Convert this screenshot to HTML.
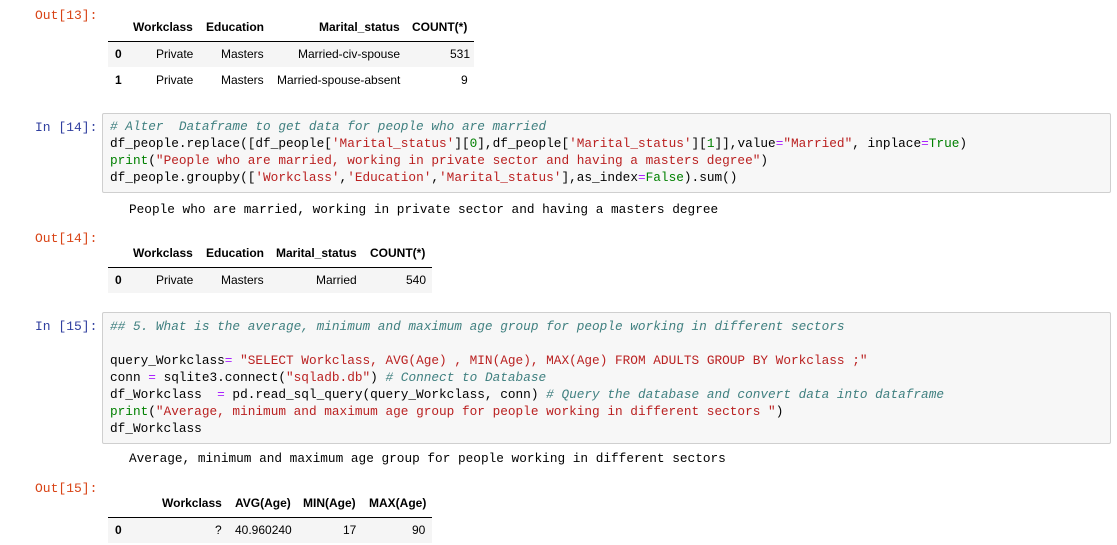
<!DOCTYPE html>
<html><head><meta charset="utf-8"><style>
body{margin:0;width:1117px;height:545px;background:#fff;position:relative;overflow:hidden;font-family:"Liberation Sans",Arial,sans-serif}
.p{position:absolute;font-family:"Liberation Mono",monospace;font-size:13px;line-height:17px;white-space:pre}
.out{color:#D84315}.in{color:#303F9F}
.box{position:absolute;left:102px;width:1007px;background:#f7f7f7;border:1px solid #cfcfcf;border-radius:2px}
.c{position:absolute;left:110px;font-family:"Liberation Mono",monospace;font-size:12.75px;line-height:17px;white-space:pre;color:#000}
.cm{color:#408080;font-style:italic}.s{color:#BA2121}.k{color:#008000}.o{color:#AA22FF}.n{color:#008000}
.t{position:absolute;font-size:12px;line-height:14px;white-space:pre;color:#000}
.b{font-weight:bold}
.r{text-align:right}
.hr{position:absolute;height:1px;background:#000}
.bg{position:absolute;background:#f5f5f5}
</style></head><body>
<div class="p out" style="left:35px;top:7px">Out[13]:</div>
<div class="t b" style="left:133px;top:20px">Workclass</div>
<div class="t b" style="left:206px;top:20px">Education</div>
<div class="t b" style="left:319px;top:20px">Marital_status</div>
<div class="t b" style="left:412px;top:20px">COUNT(*)</div>
<div class="hr" style="left:108px;top:41px;width:366px"></div>
<div class="bg" style="left:108px;top:42px;width:366px;height:25px"></div>
<div class="t b" style="left:115px;top:47px">0</div>
<div class="t" style="left:156px;top:47px">Private</div>
<div class="t" style="left:221px;top:47px">Masters</div>
<div class="t" style="left:298px;top:47px">Married-civ-spouse</div>
<div class="t" style="left:450px;top:47px">531</div>
<div class="t b" style="left:115px;top:73px">1</div>
<div class="t" style="left:156px;top:73px">Private</div>
<div class="t" style="left:221px;top:73px">Masters</div>
<div class="t" style="left:277px;top:73px">Married-spouse-absent</div>
<div class="t" style="left:461px;top:73px">9</div>

<div class="p in" style="left:35px;top:119px">In [14]:</div>
<div class="box" style="top:113px;height:78px"></div>
<div class="c" style="top:118px"><span class="cm"># Alter  Dataframe to get data for people who are married</span></div>
<div class="c" style="top:135px">df_people.replace([df_people[<span class="s">'Marital_status'</span>][<span class="n">0</span>],df_people[<span class="s">'Marital_status'</span>][<span class="n">1</span>]],value<span class="o">=</span><span class="s">"Married"</span>, inplace<span class="o">=</span><span class="k">True</span>)</div>
<div class="c" style="top:152px"><span class="k">print</span>(<span class="s">"People who are married, working in private sector and having a masters degree"</span>)</div>
<div class="c" style="top:169px">df_people.groupby([<span class="s">'Workclass'</span>,<span class="s">'Education'</span>,<span class="s">'Marital_status'</span>],as_index<span class="o">=</span><span class="k">False</span>).sum()</div>
<div class="c" style="left:129px;top:201px">People who are married, working in private sector and having a masters degree</div>

<div class="p out" style="left:35px;top:230px">Out[14]:</div>
<div class="t b" style="left:133px;top:246px">Workclass</div>
<div class="t b" style="left:206px;top:246px">Education</div>
<div class="t b" style="left:276px;top:246px">Marital_status</div>
<div class="t b" style="left:370px;top:246px">COUNT(*)</div>
<div class="hr" style="left:108px;top:267px;width:324px"></div>
<div class="bg" style="left:108px;top:268px;width:324px;height:25px"></div>
<div class="t b" style="left:115px;top:273px">0</div>
<div class="t" style="left:156px;top:273px">Private</div>
<div class="t" style="left:221px;top:273px">Masters</div>
<div class="t" style="left:316px;top:273px">Married</div>
<div class="t" style="left:406px;top:273px">540</div>

<div class="p in" style="left:35px;top:318px">In [15]:</div>
<div class="box" style="top:312px;height:130px"></div>
<div class="c" style="top:318px"><span class="cm">## 5. What is the average, minimum and maximum age group for people working in different sectors</span></div>
<div class="c" style="top:352px">query_Workclass<span class="o">=</span> <span class="s">"SELECT Workclass, AVG(Age) , MIN(Age), MAX(Age) FROM ADULTS GROUP BY Workclass ;"</span></div>
<div class="c" style="top:369px">conn <span class="o">=</span> sqlite3.connect(<span class="s">"sqladb.db"</span>) <span class="cm"># Connect to Database</span></div>
<div class="c" style="top:386px">df_Workclass  <span class="o">=</span> pd.read_sql_query(query_Workclass, conn) <span class="cm"># Query the database and convert data into dataframe</span></div>
<div class="c" style="top:403px"><span class="k">print</span>(<span class="s">"Average, minimum and maximum age group for people working in different sectors "</span>)</div>
<div class="c" style="top:420px">df_Workclass</div>
<div class="c" style="left:129px;top:450px">Average, minimum and maximum age group for people working in different sectors</div>

<div class="p out" style="left:35px;top:480px">Out[15]:</div>
<div class="t b" style="left:162px;top:496px">Workclass</div>
<div class="t b" style="left:235px;top:496px">AVG(Age)</div>
<div class="t b" style="left:303px;top:496px">MIN(Age)</div>
<div class="t b" style="left:369px;top:496px">MAX(Age)</div>
<div class="hr" style="left:108px;top:517px;width:324px"></div>
<div class="bg" style="left:108px;top:518px;width:324px;height:25px"></div>
<div class="t b" style="left:115px;top:523px">0</div>
<div class="t" style="left:215px;top:523px">?</div>
<div class="t" style="left:235px;top:523px">40.960240</div>
<div class="t" style="left:343px;top:523px">17</div>
<div class="t" style="left:412px;top:523px">90</div>
</body></html>
